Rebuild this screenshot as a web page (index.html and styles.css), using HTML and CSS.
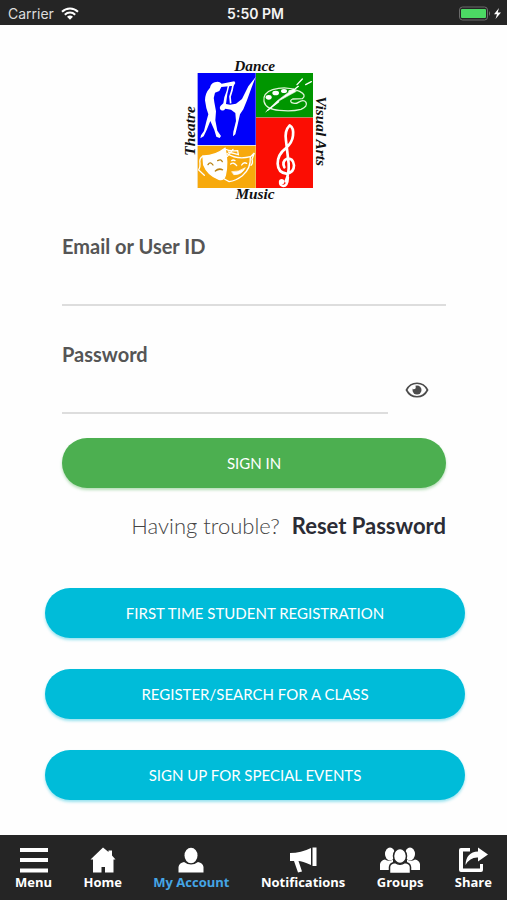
FILE: index.html
```html
<!DOCTYPE html>
<html lang="en">
<head>
    <meta charset="UTF-8">
    <meta name="viewport" content="width=device-width, initial-scale=1.0">
    <title>My Account</title>
    <link rel="stylesheet" href="styles.css">
</head>
<body>
    <!-- Status bar -->
    <header class="status-bar">
        <div class="carrier">
            <span>Carrier</span>
            <svg width="18" height="13" viewBox="0 0 18 13" fill="none" stroke="#fff" stroke-width="2">
                <path d="M1 4.8C5.5 0.5 12.5 0.5 17 4.8M3.8 7.7C6.8 4.9 11.2 4.9 14.2 7.7"/>
                <path d="M6 9.7Q9 7.2 12 9.7L9 12.8Z" fill="#fff" stroke="none"/>
            </svg>
        </div>
        <span class="clock">5:50 PM</span>
        <div class="battery">
            <svg width="44" height="15" viewBox="0 0 44 15">
                <rect x="0.5" y="1" width="28" height="13" rx="3" fill="none" stroke="#6b6b6b"/>
                <rect x="2" y="3" width="25" height="9" rx="1" fill="#4cd964"/>
                <path d="M30 5Q32 7.5 30 10Z" fill="#777"/>
                <path d="M40 2L35 8.2H38L36.5 13L42 6.5H38.7Z" fill="#fff"/>
            </svg>
        </div>
    </header>

    <main class="content">
        <!-- Logo -->
        <svg class="logo" viewBox="0 0 471 480" role="img" aria-label="Dance, Visual Arts, Music, Theatre">
            <rect x="68" y="69" width="346" height="345" fill="#e9dfd9"/>
            <rect x="68" y="69" width="174" height="216" fill="#0000fa"/>
            <rect x="243" y="69" width="171" height="133" fill="#009600"/>
            <rect x="243" y="203" width="171" height="211" fill="#fb0d03"/>
            <rect x="68" y="288" width="174" height="126" fill="#f7a90c"/>
            <!-- dancers -->
            <g fill="#fff">
                <path d="M119 97Q132 92 140 101L178 94L181 99L176 107L139 111L133 123L120 128Q114 143 118 157L123 184L121 211L127 242L138 258L134 264L124 260L118 240L106 213L95 240L86 259L76 265L78 256L87 243L95 211L100 193L94 174L90 151Q90 129 105 113Q107 101 119 97Z"/>
                <path d="M242 81L229 115L216 151L205 178L195 193L187 228L181 253L174 259L175 245L183 213L181 189L168 179L151 176Q146 184 139 181Q131 175 137 167L145 160L148 142L155 122L159 103L164 103L157 132L153 162L165 164L183 161L201 147L220 109Z"/>
            </g>
            <path d="M175 100L171 121L165 140L167 160" fill="none" stroke="#fff" stroke-width="5"/>
            <!-- palette -->
            <g fill="none" stroke="#dff5d8" stroke-width="4" stroke-linecap="round">
                <path d="M374 124Q335 106 293 119Q263 129 267 154Q272 178 313 181Q351 185 378 178Q399 169 393 157Q386 147 370 157Q361 163 350 158Q343 151 353 147L382 146Q396 135 374 124"/>
                <g fill="#fff" stroke="none">
                    <ellipse cx="281" cy="142" rx="9" ry="7"/>
                    <ellipse cx="302" cy="129" rx="10" ry="7"/>
                    <ellipse cx="327" cy="123" rx="9" ry="6"/>
                    <ellipse cx="349" cy="124" rx="9" ry="5"/>
                </g>
                <path d="M273 185L306 153L355 116L364 124L315 151Z" fill="#fff" stroke-width="2"/>
                <path d="M311 155L278 181M366 104L382 87M392 104L409 95M357 119L370 109" stroke="#fff"/>
            </g>
            <!-- treble clef -->
            <g fill="none" stroke="#fff" stroke-linecap="round" stroke-linejoin="round">
                <path d="M332 394Q343 370 341 341L333 272Q328 242 344 226Q357 233 354 257Q352 278 332 295Q308 313 308 341Q309 368 334 371Q357 369 357 346Q354 323 336 326Q320 334 328 352" stroke-width="8"/>
                <path d="M339 382Q338 408 325 408Q314 407 315 395" stroke-width="7"/>
                <circle cx="320" cy="395" r="8" fill="#fff" stroke="none"/>
            </g>
            <!-- masks -->
            <g stroke="#fff" stroke-width="4" fill="none" stroke-linecap="round">
                <path d="M84 318Q119 319 150 295Q160 337 151 376Q147 391 132 388Q97 374 86 344Z" fill="#fff"/>
                <path d="M156 311Q187 330 226 320Q228 356 202 377Q183 392 162 395L148 387M83 319Q72 325 75 341Q76 352 71 360L88 376M149 297Q162 304 188 302L190 314L160 306M157 319L174 298M226 321L238 309L231 328Q235 340 228 346"/>
                <path d="M177 374Q199 376 211 353Q190 367 171 365Z" fill="#fff" stroke-width="2"/>
                <path d="M167 342Q176 335 185 347M200 345Q206 335 215 340M170 332Q174 328 180 332"/>
                <path d="M99 344Q106 333 114 345M128 332Q138 326 142 335M121 363Q131 352 144 360Q132 355 121 363" stroke="#b98213"/>
            </g>
            <g class="logo-text">
                <text x="239" y="62" text-anchor="middle">Dance</text>
                <text x="240" y="447" text-anchor="middle">Music</text>
                <text transform="translate(61 243) rotate(-90)" text-anchor="middle">Theatre</text>
                <text transform="translate(422 243) rotate(90)" text-anchor="middle">Visual Arts</text>
            </g>
        </svg>

        <!-- Sign in form -->
        <form class="login">
            <div class="field">
                <label for="userId">Email or User ID</label>
                <input type="text" id="userId">
            </div>
            <div class="field">
                <label for="password">Password</label>
                <div class="password-row">
                    <input type="password" id="password">
                    <button type="button" class="show-password" aria-label="Show password">
                        <svg width="24" height="18" viewBox="0 0 24 18">
                            <path d="M1.5 9C6 0 18 0 22.5 9C18 18 6 18 1.5 9Z" fill="none" stroke="#4c4c4c" stroke-width="1.7"/>
                            <circle cx="12" cy="9" r="4.5" fill="#4c4c4c"/>
                            <path d="M7.500 8Q9.500 8.500 10.500 7.500Q11 6.500 10.500 4.500L8 5Z" fill="#fff"/>
                        </svg>
                    </button>
                </div>
            </div>
            <button type="submit" class="btn btn-green">SIGN IN</button>
            <p class="trouble">Having trouble? <a href="#">Reset Password</a></p>
        </form>

        <!-- Other actions -->
        <div class="actions">
            <button type="button" class="btn btn-blue">FIRST TIME STUDENT REGISTRATION</button>
            <button type="button" class="btn btn-blue">REGISTER/SEARCH FOR A CLASS</button>
            <button type="button" class="btn btn-blue">SIGN UP FOR SPECIAL EVENTS</button>
        </div>
    </main>

    <!-- Bottom navigation -->
    <nav class="tab-bar">
        <a href="#">
            <svg width="30" height="26" viewBox="0 0 30 26"><path d="M1 1H29V5H1ZM1 11H29V15H1ZM1 21.5H29V25.5H1Z"/></svg>
            <span>Menu</span>
        </a>
        <a href="#">
            <svg width="26" height="26" viewBox="0 0 26 26"><path d="M13 0.5L18.5 5V3.5H22V8.5L25.5 12.5H23.5V25.5H15V20H11.5V25.5H3V12.5H0.5Z"/></svg>
            <span>Home</span>
        </a>
        <a href="#" class="active">
            <svg width="26" height="26" viewBox="0 0 26 26"><ellipse cx="13" cy="8.5" rx="6.5" ry="7.8"/><path d="M0.5 25.5V20Q1 16 6 15Q13 20 20 15Q25 16 25.5 20V25.5Z"/></svg>
            <span>My Account</span>
        </a>
        <a href="#">
            <svg width="28" height="26" viewBox="0 0 28 26"><path d="M1 6Q12 6 22 1V18Q13 14 9.5 14L13 24.5L9 25.5L5 14H1ZM23.5 0.5H27.5V19H23.5Z"/></svg>
            <span>Notifications</span>
        </a>
        <a href="#">
            <svg width="40" height="26" viewBox="0 0 40 26">
                <ellipse cx="10" cy="7" rx="5" ry="6.5"/>
                <ellipse cx="30" cy="7" rx="5" ry="6.5"/>
                <path d="M0 23V17Q1 13 5 12.5Q9 15 13 12.5V23ZM40 23V17Q39 13 35 12.5Q31 15 27 12.5V23Z"/>
                <g stroke="#252525" stroke-width="1.5">
                    <ellipse cx="20" cy="9" rx="6.5" ry="7.5"/>
                    <path d="M9.5 26.5V20Q10 16 15 15.5Q20 19 25 15.5Q30 16 30.5 20V26.5Z"/>
                </g>
            </svg>
            <span>Groups</span>
        </a>
        <a href="#">
            <svg width="30" height="26" viewBox="0 0 30 26"><path d="M12 1H3Q1 1 1 3V23Q1 25 3 25H23Q25 25 25 23V17H22V21.5H5V4.5H12Z"/><path d="M20 0.5L30 7.5L20 14.5V10.5Q12 10 7.5 18Q8 5 20 4.5Z"/></svg>
            <span>Share</span>
        </a>
    </nav>
</body>
</html>
```
FILE: styles.css
```css
* {
    box-sizing: border-box;
}
body {
    margin: 0;
    min-height: 100vh;
    display: flex;
    flex-direction: column;
    font-family: Lato, sans-serif;
    background-color: #fefefe;
}
button {
    font-family: inherit;
    border: none;
    cursor: pointer;
}
.status-bar {
    display: grid;
    grid-template-columns: 1fr auto 1fr;
    align-items: center;
    height: 25px;
    padding: 2px 4px 0 8px;
    color: #ddd;
    background-color: #252525;
    font-family: Inter, sans-serif;
    font-size: 14px;
}
.carrier {
    display: flex;
    align-items: center;
    gap: 7px;
}
.clock {
    color: #f4f4f4;
    font-weight: 600;
}
.battery {
    display: flex;
    justify-content: flex-end;
}
.content {
    flex: 1;
    display: flex;
    flex-direction: column;
    padding-top: 25px;
}
.logo {
    align-self: center;
    width: 157px;
    height: 160px;
}
.logo-text {
    font-family: "Liberation Serif", serif;
    font-size: 46px;
    font-style: italic;
    font-weight: bold;
    fill: #111;
}
.login {
    display: flex;
    flex-direction: column;
    margin-top: 24px;
    padding: 0 61px 0 62px;
}
.field {
    margin-bottom: 24px;
}
.field + .field {
    margin-top: 12px;
}
.field label {
    display: block;
    color: #555;
    font-size: 20px;
    font-weight: bold;
    line-height: 24px;
}
.field input {
    display: block;
    width: 100%;
    height: 48px;
    padding: 8px 0;
    border: none;
    border-bottom: 2px solid #ddd;
    outline: none;
    background: transparent;
    font-family: inherit;
    font-size: 20px;
}
.password-row {
    display: flex;
    align-items: center;
}
.show-password {
    display: flex;
    padding: 0 17px;
    background: transparent;
}
.btn {
    height: 50px;
    border-radius: 25px;
    color: #fff;
    font-size: 15px;
}
.btn-green {
    background-color: #4caf50;
    box-shadow: 0 2px 3px rgba(76, 175, 80, 0.4);
}
.btn-blue {
    background-color: #00bcd9;
    box-shadow: 0 2px 3px rgba(0, 188, 217, 0.4);
}
.trouble {
    margin: 24px 0 0;
    color: #444;
    font-size: 22px;
    font-weight: 300;
    line-height: 28px;
    text-align: right;
}
.trouble a {
    margin-left: 6px;
    color: #2b2c35;
    font-weight: bold;
    text-decoration: none;
}
.actions {
    display: flex;
    flex-direction: column;
    gap: 31px;
    margin-top: 48px;
    padding: 0 42px 35px 45px;
}
.tab-bar {
    display: flex;
    justify-content: space-between;
    height: 65px;
    padding: 12px 15px 0;
    background-color: #252525;
}
.tab-bar a {
    display: flex;
    flex-direction: column;
    align-items: center;
    color: #fff;
    font-family: "Open Sans", sans-serif;
    font-size: 13px;
    font-weight: bold;
    line-height: 18px;
    text-decoration: none;
}
.tab-bar svg {
    fill: #fff;
}
.tab-bar .active {
    color: #45a5e6;
}
```
